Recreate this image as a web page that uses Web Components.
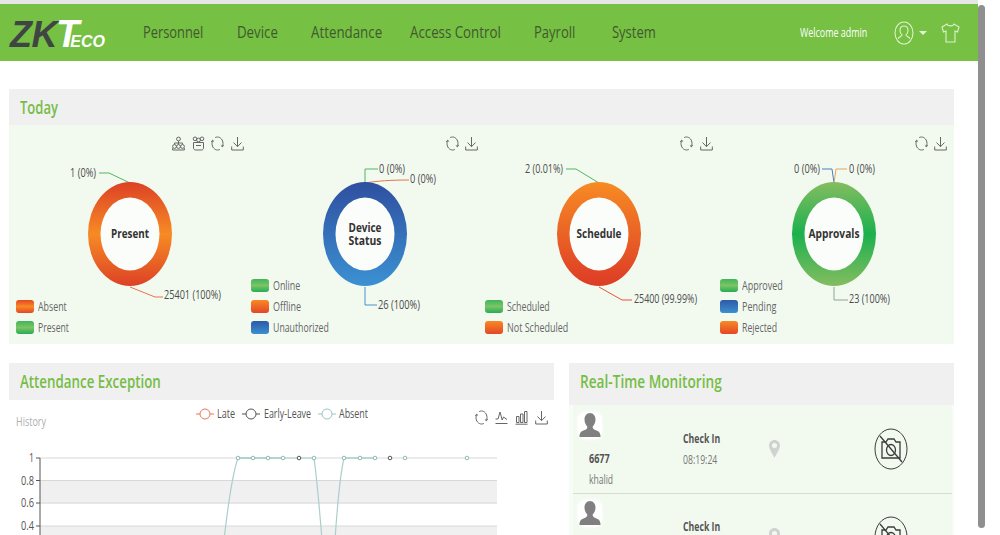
<!DOCTYPE html>
<html>
<head>
<meta charset="utf-8">
<title>ZKTeco</title>
<style>
    html, body { margin: 0; height: 535px; overflow: hidden; background: #fff; font-family: "Open Sans", "Liberation Sans", sans-serif; }
</style>
</head>
<body>
<zk-app></zk-app>
<script>
(function() {
    "use strict";

    const icons = {
        refresh: '<path d="M4.200 1.500C5 1.200 5.700 1 6.500 1c3 0 5.500 2.900 5.500 6.500 0 1.100-.2 2.100-.6 3M8.800 13.500c-.7.300-1.500.5-2.300.5C3.500 14 1 11.100 1 7.500c0-1.100.2-2.100.6-3"/><path d="M.3 5.800l1.300-1.600 1.500 1.400M12.700 9.200l-1.300 1.600-1.500-1.400"/>',
        download: '<path d="M6.500 1v9.500M2.500 6.500l4 4.200 4-4.200M.7 10.500v3.500h11.600v-3.500"/>',
        org: '<circle cx="6.500" cy="3" r="1.900"/><circle cx="2.500" cy="10.500" r="1.900"/><circle cx="6.500" cy="10.500" r="1.900"/><circle cx="10.500" cy="10.500" r="1.900"/><path d="M.6 14h11.800v-1.800M.6 14v-1.800M6.500 5v3.500M2.500 8.500V7h8v1.500"/>',
        group: '<circle cx="3" cy="2.800" r="1.800"/><circle cx="10" cy="2.800" r="1.800"/><circle cx="6.500" cy="4" r="1.900"/><path d="M1.500 6.500h10v5.500c0 1-.8 2-2 2h-6c-1.200 0-2-1-2-2zM4 9.500h5"/>',
        trend: '<path d="M.5 9h2.500l2-7 2.200 8 1.300-3 3.500 2.500M.5 13.500h12"/>',
        bars: '<path d="M1.500 6.500h2.500v6H1.500zM5.500 4h2.500v8.500H5.500zM9.500 1.500H12v11H9.500zM.5 14.200h12"/>'
    };

    // the reference has narrow lettering, so text is squeezed to the width given in w
    class zkT extends HTMLElement {
        constructor() {
            super();
            let shadowRoot = this.attachShadow({mode: 'open'});
            shadowRoot.innerHTML = `<style>
                :host { display: inline-block; white-space: nowrap; }
                span { display: inline-block; transform-origin: left center; }
            </style><span><slot></slot></span>`;
        }

        connectedCallback() {
            const w = parseFloat(this.getAttribute('w'));
            const span = this.shadowRoot.querySelector('span');
            this.style.width = w + 'px';
            span.style.transform = 'scaleX(' + (w / span.offsetWidth) + ')';
        }
    }

    class zkIcon extends HTMLElement {
        constructor() {
            super();
            let shadowRoot = this.attachShadow({mode: 'open'});
            shadowRoot.innerHTML = `<style>
                :host { display: block; width: 13px; height: 15px; }
                svg { display: block; fill: none; stroke: #666; stroke-width: 1; }
            </style>
            <svg width="13" height="15" viewBox="0 0 13 15">${icons[this.getAttribute('name')]}</svg>`;
        }
    }

    class zkToolbar extends HTMLElement {
        constructor() {
            super();
            let shadowRoot = this.attachShadow({mode: 'open'});
            shadowRoot.innerHTML = `<style>:host { display: flex; gap: 6.500px; justify-content: flex-end; }</style><slot></slot>`;
        }
    }

    class zkPanel extends HTMLElement {
        constructor() {
            super();
            let shadowRoot = this.attachShadow({mode: 'open'});
            shadowRoot.innerHTML = `<style>
                :host { display: flex; flex-direction: column; overflow: hidden; }
                h2 { margin: 0; height: var(--head, 37px); padding: 0 0 var(--pad, 1px) 11px; box-sizing: border-box; display: flex; align-items: center;
                     background: #f0f0f0; color: #76bd46; font: 600 17.500px "Open Sans", sans-serif; }
                .body { flex: 1; min-height: 0; }
            </style>
            <h2><zk-t w="${this.getAttribute('w')}">${this.getAttribute('title')}</zk-t></h2>
            <div class="body"><slot></slot></div>`;
        }
    }

    class zkLogo extends HTMLElement {
        constructor() {
            super();
            let shadowRoot = this.attachShadow({mode: 'open'});
            shadowRoot.innerHTML = `<style>
                :host { display: flex; align-items: baseline; width: 96px; margin: 2px 0 0 10px; font-family: "Liberation Sans", sans-serif; font-style: italic; font-weight: 700; line-height: 1; }
                .zk { font-size: 36px; color: #3f4543; letter-spacing: -.5px; }
                .t { font-size: 38px; color: #fff; margin-left: -1px; }
                .eco { font-size: 16px; color: #fff; margin-left: -9px; }
            </style><span class="zk">ZK</span><span class="t">T</span><span class="eco">ECO</span>`;
        }
    }

    class zkTopbar extends HTMLElement {
        constructor() {
            super();
            let shadowRoot = this.attachShadow({mode: 'open'});
            const menu = [['Personnel', 60, 34], ['Device', 41, 33], ['Attendance', 71, 28], ['Access Control', 91, 33], ['Payroll', 41, 37], ['System', 44, 0]];
            shadowRoot.innerHTML = `<style>
                :host { display: flex; align-items: center; height: 57px; background: #76c043; box-sizing: border-box; }
                nav { display: flex; margin-left: 37px; font-size: 16.500px; color: #41592f; padding-bottom: 2px; }
                .right { margin-left: auto; display: flex; align-items: center; padding-right: 18px; color: #fff; }
                .welcome { font-size: 12px; margin-right: 27px; }
                svg { display: block; fill: none; stroke: #dcf2ca; stroke-width: 1.100; }
                .caret { width: 0; height: 0; border: 4px solid transparent; border-top: 4px solid #e4f5d6; border-bottom: 0; margin: 0 14px 0 5px; }
            </style>
            <zk-logo></zk-logo>
            <nav>${menu.map(m => `<zk-t w="${m[1]}" style="margin-right:${m[2]}px">${m[0]}</zk-t>`).join('')}</nav>
            <div class="right">
                <zk-t class="welcome" w="67">Welcome admin</zk-t>
                <svg width="20" height="24" viewBox="0 0 20 24"><ellipse cx="10" cy="12" rx="9" ry="11"/><path d="M10 5c-2.500 0-4 2-4 4.500 0 2 .8 3.500 2 4.500 0 1-2 1.500-4 3.500M10 5c2.500 0 4 2 4 4.500 0 2-.8 3.500-2 4.500 0 1 2 1.500 4 3.500"/></svg>
                <span class="caret"></span>
                <svg width="19" height="20" viewBox="0 0 19 20"><path d="M6 1L1 4l1.500 5 2.500-1v11h9V8l2.500 1L18 4l-5-3c-.5 2.500-6.500 2.500-7 0z"/></svg>
            </div>`;
        }
    }

    // one donut of the Today panel; coordinates are relative to the card, centre of the ring is 120,109
    class zkDonut extends HTMLElement {
        constructor() {
            super();
            this.attachShadow({mode: 'open'});
        }

        connectedCallback() {
            const d = JSON.parse(this.getAttribute('data'));
            const stops = d.stops.map((c, i) => `<stop offset="${i / (d.stops.length - 1)}" stop-color="${c}"/>`).join('');
            const centre = d.title.map((t, i) => `<text x="120" y="${113 + (i - (d.title.length - 1) / 2) * 13}" text-anchor="middle" textLength="${d.tl}" lengthAdjust="spacingAndGlyphs" class="c">${t}</text>`).join('');
            this.shadowRoot.innerHTML = `<style>
                :host { display: grid; height: 219px; min-width: 0; }
                svg { display: block; grid-area: 1 / 1; overflow: visible; }
                text { font: 12.500px "Open Sans", sans-serif; fill: #4c4c4c; }
                text.c { font-weight: 700; font-size: 13px; fill: #333; }
                .tools { grid-area: 1 / 1; align-self: start; padding: 11px 1px 0 0; }
                .legend { grid-area: 1 / 1; align-self: end; justify-self: start; display: flex; flex-direction: column; gap: 5px; padding: 0 0 9px 6px;
                          font-size: 12.500px; color: #666; }
                .row { display: flex; align-items: center; gap: 4px; height: 16px; }
                i { width: 18px; height: 13px; border-radius: 3px; }
            </style>
            <svg width="234" height="219" viewBox="0 0 234 219">
                <defs><linearGradient id="ring" x1="0" y1="0" x2="0" y2="1">${stops}</linearGradient></defs>
                ${d.lines.map(l => `<path d="${l[0]}" fill="none" stroke="${l[1]}" stroke-width="1"/>`).join('')}
                <ellipse cx="120" cy="109" rx="42" ry="52" fill="url(#ring)"/>
                <ellipse cx="120" cy="109" rx="29.500" ry="36.500" fill="#fbfdfa"/>
                ${centre}
                ${d.labels.map(l => `<text x="${l[1]}" y="${l[2]}" textLength="${l[3]}" lengthAdjust="spacingAndGlyphs">${l[0]}</text>`).join('')}
            </svg>
            <zk-toolbar class="tools">${d.tools.map(n => `<zk-icon name="${n}"></zk-icon>`).join('')}</zk-toolbar>
            <div class="legend">${d.legend.map(l => `<div class="row"><i style="background:${l[1]}"></i><zk-t w="${l[2]}">${l[0]}</zk-t></div>`).join('')}</div>`;
        }
    }

    class zkLineChart extends HTMLElement {
        constructor() {
            super();
            let shadowRoot = this.attachShadow({mode: 'open'});
            const xs = [238, 253, 268, 283, 299, 314, 344, 360, 375, 390, 405, 467];
            const dark = [299, 390];
            const ticks = [['1', 458], ['0.8', 480.500], ['0.6', 503], ['0.4', 526]];
            const legend = [['Late', '#e8775a', 196], ['Early-Leave', '#555', 242], ['Absent', '#9cc3c6', 318]];
            shadowRoot.innerHTML = `<style>
                :host { display: block; height: 135px; position: relative; }
                svg { display: block; }
                text { font: 12.500px "Open Sans", sans-serif; fill: #555; }
                text.h { fill: #b0b0b0; }
                .tools { position: absolute; left: 466px; top: 10px; width: 73px; justify-content: space-between; gap: 0; }
            </style>
            <svg width="545" height="135" viewBox="9 400 545 135">
                <text class="h" x="16" y="426" textLength="30" lengthAdjust="spacingAndGlyphs">History</text>
                ${legend.map(l => `<path d="M${l[2]} 414h4M${l[2] + 14} 414h4" stroke="${l[1]}"/><circle cx="${l[2] + 9}" cy="414" r="5" fill="#fff" stroke="${l[1]}"/>`).join('')}
                <text x="217" y="418" textLength="18" lengthAdjust="spacingAndGlyphs">Late</text>
                <text x="264" y="418" textLength="47" lengthAdjust="spacingAndGlyphs">Early-Leave</text>
                <text x="339" y="418" textLength="29" lengthAdjust="spacingAndGlyphs">Absent</text>
                <rect x="40" y="481" width="457" height="22.500" fill="#f0f0f0"/>
                <rect x="40" y="526" width="457" height="12" fill="#f0f0f0"/>
                ${ticks.map(t => `<path d="M40 ${t[1]}h457" stroke="#d8d8d8"/><path d="M36 ${t[1]}h4" stroke="#555"/><text x="34" y="${t[1] + 4}" text-anchor="end" textLength="${t[0].length > 1 ? 13 : 5}" lengthAdjust="spacingAndGlyphs">${t[0]}</text>`).join('')}
                <path d="M40 458v80" stroke="#555"/>
                <path d="M224 540C228 505 232 475 238 458H314C317 480 320 515 322 540M335 540C337 510 339 480 344 458" fill="none" stroke="#aacfcb" stroke-width="1.200"/>
                <path d="M238 458h45M344 458h31" stroke="#aacfcb" stroke-width="1.500"/>
                ${xs.map(x => `<circle cx="${x}" cy="458" r="1.800" fill="#fff" stroke="${dark.includes(x) ? '#555' : '#8fb8b8'}"/>`).join('')}
            </svg>
            <zk-toolbar class="tools"><zk-icon name="refresh"></zk-icon><zk-icon name="trend"></zk-icon><zk-icon name="bars"></zk-icon><zk-icon name="download"></zk-icon></zk-toolbar>`;
        }
    }

    class zkEvent extends HTMLElement {
        constructor() {
            super();
            let shadowRoot = this.attachShadow({mode: 'open'});
            shadowRoot.innerHTML = `<style>
                :host { display: grid; grid-template-columns: 110px 86px 105px 1fr; height: 88px; box-shadow: 0 1px #d5dcd3; color: #555; font-size: 12.500px; }
                svg { display: block; }
                .who { padding: 7px 0 0 5px; }
                .avatar { background: #fff; width: 24px; height: 27px; border-radius: 8px; box-shadow: 0 0 4px #fff; }
                .id { margin: 12px 0 0 11px; font-weight: 700; line-height: 16px; }
                .name { margin: 5px 0 0 11px; line-height: 16px; color: #777; }
                .what { padding-top: 26px; }
                .what b { display: block; line-height: 16px; color: #555; }
                .what div { margin-top: 5px; line-height: 16px; color: #777; }
                .pin { padding-top: 35px; }
                .cam { padding-top: 23px; }
            </style>
            <div class="who">
                <div class="avatar"><svg width="24" height="27" viewBox="0 0 24 27"><path d="M12 1c-3.500 0-5.500 3-5.500 6.500 0 3 1.300 5.500 2.800 7 .3 2-1 3-3.800 4-2.500 1-4 2-4 6.500h21c0-4.500-1.500-5.500-4-6.500-2.800-1-4.100-2-3.800-4 1.500-1.500 2.800-4 2.800-7C17.500 4 15.500 1 12 1z" fill="#808080"/></svg></div>
                <div class="id"><zk-t w="21">${this.getAttribute('pin')}</zk-t></div>
                <div class="name"><zk-t w="24">${this.getAttribute('name')}</zk-t></div>
            </div>
            <div class="what"><b><zk-t w="37">${this.getAttribute('state')}</zk-t></b><div><zk-t w="34">${this.getAttribute('time')}</zk-t></div></div>
            <div class="pin"><svg width="11" height="18" viewBox="0 0 11 18"><path fill-rule="evenodd" d="M5.500 0C2.500 0 0 2.300 0 5.500 0 9 3.500 13.500 5.500 18 7.500 13.500 11 9 11 5.500 11 2.300 8.500 0 5.500 0zm0 3a2.500 2.500 0 1 1 0 5 2.500 2.500 0 0 1 0-5z" fill="#cfd3cf"/></svg></div>
            <div class="cam"><svg width="34" height="42" viewBox="0 0 34 42" fill="none" stroke="#3c3c3c"><ellipse cx="17" cy="21" rx="16" ry="20"/><path d="M8 14h4l2-3h6l2 3h4v16H8z" stroke-width="1.300"/><ellipse cx="17" cy="22" rx="4.500" ry="5.500" stroke-width="1.300"/><path d="M6 8l22 26" stroke-width="1.300"/></svg></div>`;
        }
    }

    class zkApp extends HTMLElement {
        constructor() {
            super();
            let shadowRoot = this.attachShadow({mode: 'open'});
            const g = 'linear-gradient(#3fb55c,#7cc465 50%,#26ad54)';
            const o = 'linear-gradient(#f78a25,#e44626)';
            const r = 'linear-gradient(#e44626,#f78a25 50%,#e44626)';
            const b = 'linear-gradient(#2f5aa8,#3b8fd0)';
            const charts = [
                { title: ['Present'], tl: 38, stops: ['#dc4126', '#f78b24', '#dd4126'], tools: ['org', 'group', 'refresh', 'download'],
                  lines: [['M89 48H99L120 58', '#55b562'], ['M120 162L145 172H153', '#e8734c']],
                  labels: [['1 (0%)', 60, 52, 26], ['25401 (100%)', 154, 174, 57]],
                  legend: [['Absent', r, 29], ['Present', g, 31]] },
                { title: ['Device', 'Status'], tl: 33, stops: ['#2f4fa0', '#3b91d2'], tools: ['refresh', 'download'],
                  lines: [['M120 58V44H133', '#55b562'], ['M120 58C132 56 145 55 164 55', '#e8734c'], ['M120 162V180H132', '#4a8fd0']],
                  labels: [['0 (0%)', 134, 48, 26], ['0 (0%)', 165, 58, 26], ['26 (100%)', 133, 184, 42]],
                  legend: [['Online', g, 27], ['Offline', o, 28], ['Unauthorized', b, 56]] },
                { title: ['Schedule'], tl: 45, stops: ['#f78b24', '#dd3b26'], tools: ['refresh', 'download'],
                  lines: [['M87 44H97L120 58', '#55b562'], ['M120 162L143 175H153', '#e8533c']],
                  labels: [['2 (0.01%)', 46, 48, 38], ['25400 (99.99%)', 155, 178, 63]],
                  legend: [['Scheduled', g, 43], ['Not Scheduled', o, 61]] },
                { title: ['Approvals'], tl: 51, stops: ['#84bd60', '#1cb04e', '#84bd60'], tools: ['refresh', 'download'],
                  lines: [['M108 44H118L120 58', '#4a7fc0'], ['M133 44H122L120 58', '#e8a060'], ['M120 162V175H134', '#8aa888']],
                  labels: [['0 (0%)', 80, 48, 26], ['0 (0%)', 135, 48, 26], ['23 (100%)', 135, 178, 41]],
                  legend: [['Approved', g, 41], ['Pending', b, 34], ['Rejected', o, 35]] }
            ];
            shadowRoot.innerHTML = `<style>
                :host { display: grid; grid-template-columns: 978px 7px 15px; height: 535px; overflow: hidden; }
                .main { display: flex; flex-direction: column; height: 535px; overflow: hidden; padding-top: 4px; box-sizing: border-box; background: linear-gradient(#e6e6e6 4px, #fff 4px); }
                .bar { margin-top: 5px; height: 523px; background: #8f8f8f; border-radius: 4px; }
                .today { margin: 28px 0 0 9px; width: 945px; height: 255px; flex: none; --head: 36px; }
                .cards { display: grid; grid-template-columns: repeat(4, 234.500px); padding-left: 1px; height: 219px; background: #f2faf0; }
                .lower { display: grid; grid-template-columns: 545px 385px; column-gap: 15px; margin: 19px 0 0 9px; flex: 1; min-height: 0; }
                .rt { --head: 42px; --pad: 6px; background: #f8fcf7; }
                .rows { background: #f2faf0; margin: 0 2px 0 4px; height: 200px; }
            </style>
            <div class="main">
                <zk-topbar></zk-topbar>
                <zk-panel class="today" title="Today" w="38"><div class="cards">
                    ${charts.map(c => `<zk-donut data='${JSON.stringify(c)}'></zk-donut>`).join('')}
                </div></zk-panel>
                <div class="lower">
                    <zk-panel title="Attendance Exception" w="141"><zk-line-chart></zk-line-chart></zk-panel>
                    <zk-panel class="rt" title="Real-Time Monitoring" w="142"><div class="rows">
                        <zk-event pin="6677" name="khalid" state="Check In" time="08:19:24"></zk-event>
                        <zk-event pin="" name="" state="Check In" time=""></zk-event>
                    </div></zk-panel>
                </div>
            </div>
            <div class="bar"></div><div></div>`;
        }
    }

    window.customElements.define('zk-t', zkT);
    window.customElements.define('zk-icon', zkIcon);
    window.customElements.define('zk-toolbar', zkToolbar);
    window.customElements.define('zk-panel', zkPanel);
    window.customElements.define('zk-logo', zkLogo);
    window.customElements.define('zk-topbar', zkTopbar);
    window.customElements.define('zk-donut', zkDonut);
    window.customElements.define('zk-line-chart', zkLineChart);
    window.customElements.define('zk-event', zkEvent);
    window.customElements.define('zk-app', zkApp);
})();
</script>
</body>
</html>
